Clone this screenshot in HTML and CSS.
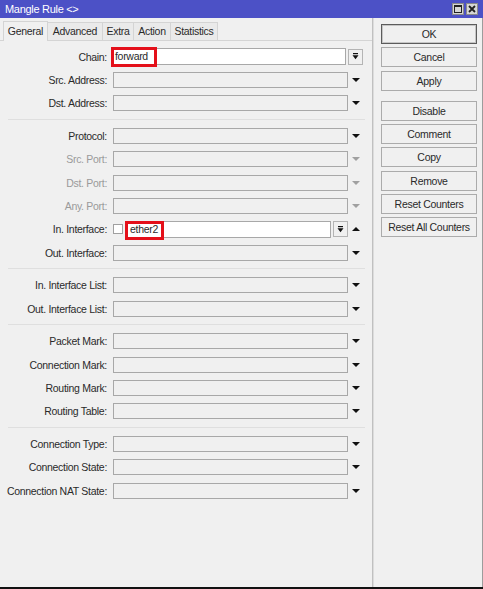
FILE: index.html
```html
<!doctype html>
<html lang="en">
<head>
    <meta charset="UTF-8">
    <title>Mangle Rule</title>
    <link rel="stylesheet" href="styles.css">
</head>
<body>
<div class="win">
    <div class="title">
        <span>Mangle Rule &lt;&gt;</span>
        <div class="tbtns">
            <span class="tbtn">
                <svg width="8" height="8" viewBox="0 0 8 8"><rect x="0.5" y="0.5" width="7" height="7" fill="none" stroke="#222"/><rect x="0" y="0" width="8" height="2" fill="#222"/></svg>
            </span>
            <span class="tbtn">
                <svg width="8" height="8" viewBox="0 0 8 8"><path d="M1 1L7 7M7 1L1 7" stroke="#222" stroke-width="1.8"/></svg>
            </span>
        </div>
    </div>
    <div class="content">
        <div class="main">
            <ul class="tabs">
                <li class="on t1">General</li>
                <li class="t2">Advanced</li>
                <li class="t3">Extra</li>
                <li class="t4">Action</li>
                <li class="t5">Statistics</li>
            </ul>
            <div class="panel">
                <!-- chain -->
                <div class="row">
                    <label>Chain:</label>
                    <div class="field white w-chain">forward</div>
                    <span class="dbtn"><svg width="7" height="7" viewBox="0 0 7 7"><rect x="1" y="0" width="5" height="1.2" fill="#111"/><path d="M0.5 2.2h6L3.5 6.2z" fill="#111"/></svg></span>
                    <span class="hl hl-chain"></span>
                </div>
                <div class="row"><label>Src. Address:</label><div class="field"></div><span class="arr"><i class="down"></i></span></div>
                <div class="row"><label>Dst. Address:</label><div class="field"></div><span class="arr"><i class="down"></i></span></div>
                <div class="sep"></div>

                <div class="row"><label>Protocol:</label><div class="field"></div><span class="arr"><i class="down"></i></span></div>
                <div class="row off"><label>Src. Port:</label><div class="field"></div><span class="arr"><i class="down"></i></span></div>
                <div class="row off"><label>Dst. Port:</label><div class="field"></div><span class="arr"><i class="down"></i></span></div>
                <div class="row off"><label>Any. Port:</label><div class="field"></div><span class="arr"><i class="down"></i></span></div>
                <!-- in interface -->
                <div class="row">
                    <label>In. Interface:</label>
                    <span class="check"></span>
                    <div class="field white w-iface">ether2</div>
                    <span class="dbtn"><svg width="7" height="7" viewBox="0 0 7 7"><rect x="1" y="0" width="5" height="1.2" fill="#111"/><path d="M0.5 2.2h6L3.5 6.2z" fill="#111"/></svg></span>
                    <span class="arr"><i class="up"></i></span>
                    <span class="hl hl-iface"></span>
                </div>
                <div class="row"><label>Out. Interface:</label><div class="field"></div><span class="arr"><i class="down"></i></span></div>
                <div class="sep"></div>

                <div class="row"><label>In. Interface List:</label><div class="field"></div><span class="arr"><i class="down"></i></span></div>
                <div class="row"><label>Out. Interface List:</label><div class="field"></div><span class="arr"><i class="down"></i></span></div>
                <div class="sep"></div>

                <div class="row"><label>Packet Mark:</label><div class="field"></div><span class="arr"><i class="down"></i></span></div>
                <div class="row"><label>Connection Mark:</label><div class="field"></div><span class="arr"><i class="down"></i></span></div>
                <div class="row"><label>Routing Mark:</label><div class="field"></div><span class="arr"><i class="down"></i></span></div>
                <div class="row"><label>Routing Table:</label><div class="field"></div><span class="arr"><i class="down"></i></span></div>
                <div class="sep"></div>

                <div class="row"><label>Connection Type:</label><div class="field"></div><span class="arr"><i class="down"></i></span></div>
                <div class="row"><label>Connection State:</label><div class="field"></div><span class="arr"><i class="down"></i></span></div>
                <div class="row"><label>Connection NAT State:</label><div class="field"></div><span class="arr"><i class="down"></i></span></div>
            </div>
        </div>
        <div class="side">
            <a class="btn def" href="javascript:;">OK</a>
            <a class="btn" href="javascript:;">Cancel</a>
            <a class="btn" href="javascript:;">Apply</a>
            <a class="btn gap" href="javascript:;">Disable</a>
            <a class="btn" href="javascript:;">Comment</a>
            <a class="btn" href="javascript:;">Copy</a>
            <a class="btn" href="javascript:;">Remove</a>
            <a class="btn" href="javascript:;">Reset Counters</a>
            <a class="btn" href="javascript:;">Reset All Counters</a>
        </div>
    </div>
</div>
</body>
</html>
```

FILE: styles.css
```css
*{
    margin:0;
    padding:0;
    list-style:none;
    box-sizing:border-box;
}
body{
    font-family:"Liberation Sans",Arial,sans-serif;
    font-size:10.5px;
    letter-spacing:-0.3px;
    color:#2a2a2a;
    background:#f0f0f0;
}
.win{
    width:483px;
    height:589px;
    display:flex;
    flex-direction:column;
    background:#f0f0f0;
    border-bottom:2px solid #111;
}
.title{
    height:18px;
    background:#4c51c6;
    color:#fff;
    font-size:11px;
    display:flex;
    align-items:center;
    justify-content:space-between;
    padding:0 5px 0 5px;
}
.tbtns{
    display:flex;
    gap:2px;
}
.tbtn{
    width:12px;
    height:12px;
    background:#d6d6d6;
    border:1px solid #8a8a8a;
    display:flex;
    align-items:center;
    justify-content:center;
}
.content{
    flex:1;
    display:flex;
    border-right:1px solid #9c9c9c;
}
.main{
    width:373px;
    border-right:1px solid #c0c0c0;
    box-shadow:1px 0 0 #dcdcdc;
    display:flex;
    flex-direction:column;
    padding-top:3px;
}
.tabs{
    display:flex;
    padding-left:3px;
    height:19px;
    align-items:flex-end;
}
.tabs li{
    height:18px;
    line-height:17px;
    text-align:center;
    background:#eaeaea;
    border:1px solid #d4d4d4;
    border-bottom:none;
    border-left:none;
}
.tabs li.on{
    height:20px;
    line-height:18px;
    background:#f0f0f0;
    border-left:1px solid #d4d4d4;
    margin-bottom:-1px;
    position:relative;
    z-index:1;
}
.tabs .t1{ width:45px; }
.tabs .t2{ width:55px; }
.tabs .t3{ width:31px; }
.tabs .t4{ width:37px; }
.tabs .t5{ width:47px; }
.panel{
    flex:1;
    border-top:1px solid #d4d4d4;
    padding-top:4px;
}
.row{
    height:23.33px;
    display:flex;
    align-items:center;
    position:relative;
}
.row label{
    width:107px;
    text-align:right;
    margin-right:6px;
    white-space:nowrap;
}
.row.off label{
    color:#9a9a9a;
}
.field{
    width:235px;
    height:16px;
    border:1px solid #a8a8a8;
    background:#f0f0f0;
    line-height:14px;
    padding-left:1px;
    white-space:nowrap;
}
.field.white{
    background:#fff;
}
.w-chain{
    width:233px;
    height:17px;
}
.w-iface{
    width:204px;
    height:17px;
    padding-left:2px;
}
.dbtn{
    width:15px;
    height:16px;
    margin-left:2px;
    border:1px solid #b4b4b4;
    background:#f0f0f0;
    display:flex;
    align-items:center;
    justify-content:center;
}
.check{
    width:10px;
    height:10px;
    border:1px solid #a0a0a0;
    background:#fff;
    margin-right:4px;
}
.arr{
    width:16px;
    display:flex;
    justify-content:center;
}
.arr i{
    width:0;
    height:0;
    border-left:4px solid transparent;
    border-right:4px solid transparent;
}
.arr i.down{
    border-top:4px solid #111;
}
.arr i.up{
    border-bottom:4px solid #111;
}
.row.off .arr i.down{
    border-top-color:#a0a0a0;
}
.sep{
    height:1px;
    background:#dfdfdf;
    margin:4px 7px 4.33px 8px;
}
.hl{
    position:absolute;
    border:3px solid #e4101a;
}
.hl-chain{
    left:111px;
    top:2px;
    width:46px;
    height:20px;
}
.hl-iface{
    left:125px;
    top:3px;
    width:39px;
    height:19px;
}
.side{
    flex:1;
    padding:6px 0 0 8px;
    display:flex;
    flex-direction:column;
    gap:3.33px;
}
.btn{
    display:block;
    width:96px;
    height:20px;
    line-height:18px;
    text-align:center;
    text-decoration:none;
    color:#2a2a2a;
    background:#f0f0f0;
    border:1px solid #ababab;
}
.btn.def{
    border-color:#5c5c5c;
    box-shadow:inset 0 0 0 1px #c6c6c6;
}
.btn.gap{
    margin-top:6.7px;
}
```
